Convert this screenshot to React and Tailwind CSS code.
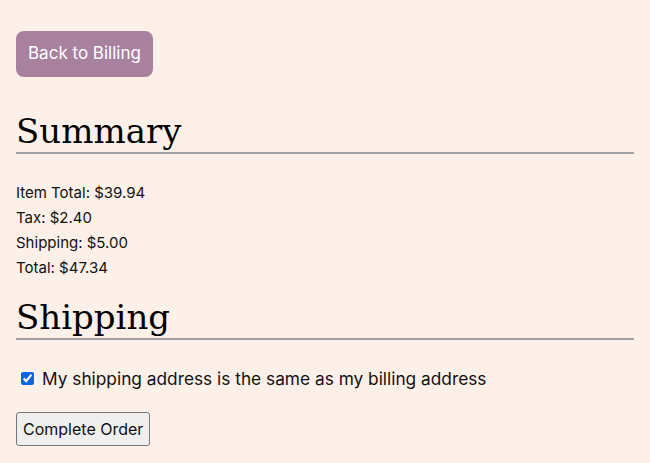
import React from 'react';

const serif = { fontFamily: '"DejaVu Serif", "Liberation Serif", serif' };

const SummaryLine = ({ label, value }) => (
  <p className="leading-[25px]">
    {label}: {value}
  </p>
);

export default function App() {
  return (
    <div className="min-h-[463px] bg-[#fdf0e8] px-4 pt-[31px] pb-4 text-[#111] font-['Inter',sans-serif]">
      <button className="h-[46px] px-[12px] rounded-lg bg-[#a8819f] text-white text-[17px]">
        Back to Billing
      </button>

      <h2
        className="mt-[33px] border-b-2 border-[#a0a0a0] text-[34px] leading-[42px] text-black"
        style={serif}
      >
        Summary
      </h2>

      <div className="mt-[26px] text-[15px]">
        <SummaryLine label="Item Total" value="$39.94" />
        <SummaryLine label="Tax" value="$2.40" />
        <SummaryLine label="Shipping" value="$5.00" />
        <SummaryLine label="Total" value="$47.34" />
      </div>

      <h2
        className="mt-[16px] border-b-2 border-[#a0a0a0] text-[34px] leading-[42px] text-black"
        style={serif}
      >
        Shipping
      </h2>

      <label className="mt-[26px] flex items-center gap-[8px] pl-[5px] text-[17.3px]">
        <input type="checkbox" defaultChecked className="w-[13px] h-[13px] accent-[#0b64e0]" />
        My shipping address is the same as my billing address
      </label>

      <button className="mt-[20px] h-[34px] px-[6px] border border-[#767676] rounded-[3px] bg-[#efefef] text-base">
        Complete Order
      </button>
    </div>
  );
}
